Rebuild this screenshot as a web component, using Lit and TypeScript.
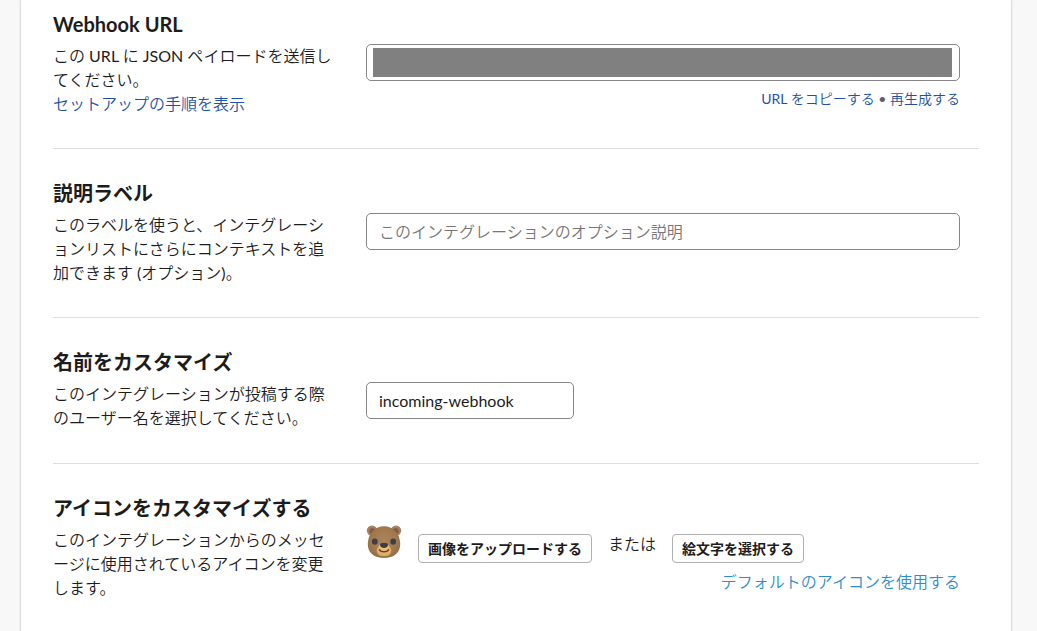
import { LitElement, html, css, svg } from "lit";
import { customElement, state } from "lit/decorators.js";

const bear = svg`
  <defs>
    <radialGradient id="fur" cx="50%" cy="45%" r="60%">
      <stop offset="0" stop-color="#ab845a" />
      <stop offset="0.6" stop-color="#a27a50" />
      <stop offset="1" stop-color="#916c44" />
    </radialGradient>
    <radialGradient id="snout" cx="50%" cy="40%" r="60%">
      <stop offset="0" stop-color="#f0c07e" />
      <stop offset="1" stop-color="#dda963" />
    </radialGradient>
  </defs>
  <circle cx="6" cy="6.6" r="5.2" fill="#a67f5c" />
  <circle cx="30" cy="6.6" r="5.2" fill="#a67f5c" />
  <circle cx="6.4" cy="7.2" r="2.9" fill="#7d5b44" />
  <circle cx="29.6" cy="7.2" r="2.9" fill="#7d5b44" />
  <path d="M18 2.3C26.500 2.3 33.600 8.4 34.2 19.5C34.6 29 27.5 34 18 34S1.400 29 1.800 19.500C2.400 8.400 9.500 2.300 18 2.300Z" fill="url(#fur)" />
  <path d="M18 18.400C21.500 18.400 22.300 20.600 24 23C25.600 25 25.600 27.500 24.500 29.500C23.200 31.600 21 32.200 18 32.200S12.800 31.600 11.500 29.500C10.400 27.500 10.400 25 12 23C13.700 20.600 14.500 18.400 18 18.400Z" fill="url(#snout)" />
  <ellipse cx="8.800" cy="17.600" rx="2.900" ry="3.200" fill="#3b4045" />
  <ellipse cx="27.200" cy="17.600" rx="2.900" ry="3.200" fill="#3b4045" />
  <path d="M14 21C14 19.200 16 18.800 18 18.800S22 19.200 22 21C22 22.800 19.500 24 18 24S14 22.800 14 21Z" fill="#3b3d40" />
  <path d="M13.400 25.800C15 28.300 21 28.300 22.600 25.800" fill="none" stroke="#5a4634" stroke-width="1.500" stroke-linecap="round" />
`;

@customElement("app-root")
export class AppRoot extends LitElement {
  @state() private label = "";
  @state() private username = "incoming-webhook";

  static styles = css`
    :host {
      display: block;
      min-height: 100vh;
      overflow: hidden;
      background: #f8f8f8;
      color: #1d1c1d;
      font-family: Lato, "Noto Sans CJK JP DemiLight", "Noto Sans CJK JP Light", "Noto Sans CJK JP", sans-serif;
      font-size: 16px;
      line-height: 24px;
    }
    *,
    *::before {
      box-sizing: border-box;
    }
    .card {
      min-height: 100vh;
      margin: 0 25px 0 20px;
      padding: 0 32px;
      background: #fff;
      border: solid #ddd;
      border-width: 0 1px;
      box-shadow: 0 1px 2px rgba(0, 0, 0, 0.1);
    }
    .section {
      padding: 32px 0;
      border-bottom: 1px solid #ddd;
    }
    .section:first-child {
      padding-top: 12px;
    }
    .section:last-child {
      border-bottom: 0;
    }
    .title {
      margin: 0 0 8px;
      font-family: Lato, "Noto Sans CJK JP", sans-serif;
      font-size: 20px;
      line-height: 24px;
      font-weight: 700;
    }
    .row {
      display: grid;
      grid-template-columns: 280px minmax(0, 1fr);
      column-gap: 33px;
      min-height: 49px;
      padding-right: 19px;
    }
    .text {
      margin: 0;
    }
    a {
      color: #1f52a3;
      text-decoration: none;
    }
    a:hover {
      text-decoration: underline;
    }
    .field {
      display: block;
      width: 100%;
      height: 37px;
      margin: 0;
      padding: 0 12px;
      border: 1px solid #868686;
      border-radius: 5px;
      background-color: #fff;
      color: #1d1c1d;
      font: inherit;
      outline: 0;
    }
    .field::placeholder {
      color: #767676;
      opacity: 1;
    }
    .field:focus {
      border-color: #1264a3;
    }
    .masked {
      padding: 3px 7px 3px 6px;
      background: #808080 content-box;
      color: #808080;
    }
    .short {
      width: 208px;
    }
    .hint {
      margin: 6px 0 0;
      font-size: 14px;
      text-align: right;
      color: #616061;
    }
    .picker {
      display: flex;
      align-items: flex-start;
      gap: 16px;
      margin-top: -4px;
    }
    .bear {
      display: block;
      width: 36px;
      height: 36px;
    }
    .or {
      margin-top: 8px;
    }
    .btn {
      height: 29px;
      margin: 10px 0 0;
      padding: 0 9px 2px;
      border: 1px solid #b0b0b0;
      border-radius: 4px;
      background: #fff;
      color: #1d1c1d;
      font-family: Lato, "Noto Sans CJK JP", sans-serif;
      font-size: 14px;
      font-weight: 700;
      cursor: pointer;
    }
    .reset {
      margin: 7px 0 0;
      text-align: right;
    }
    .reset a {
      color: #2f8dcd;
    }
  `;

  render() {
    return html`
      <main class="card" lang="ja">
        <section class="section">
          <h2 class="title"><label for="url">Webhook URL</label></h2>
          <div class="row">
            <p class="text">
              この URL に JSON ペイロードを送信してください。<br />
              <a href="#setup">セットアップの手順を表示</a>
            </p>
            <div>
              <input id="url" class="field masked" type="text" readonly />
              <p class="hint">
                <a href="#copy">URL をコピーする</a> •
                <a href="#regenerate">再生成する</a>
              </p>
            </div>
          </div>
        </section>

        <section class="section">
          <h2 class="title"><label for="label">説明ラベル</label></h2>
          <div class="row">
            <p class="text">
              このラベルを使うと、インテグレーションリストにさらにコンテキストを追加できます (オプション)。
            </p>
            <div>
              <input
                id="label"
                class="field"
                type="text"
                placeholder="このインテグレーションのオプション説明"
                .value=${this.label}
                @input=${(e: Event) => (this.label = (e.target as HTMLInputElement).value)}
              />
            </div>
          </div>
        </section>

        <section class="section">
          <h2 class="title"><label for="name">名前をカスタマイズ</label></h2>
          <div class="row">
            <p class="text">このインテグレーションが投稿する際のユーザー名を選択してください。</p>
            <div>
              <input
                id="name"
                class="field short"
                type="text"
                .value=${this.username}
                @input=${(e: Event) => (this.username = (e.target as HTMLInputElement).value)}
              />
            </div>
          </div>
        </section>

        <section class="section">
          <h2 class="title">アイコンをカスタマイズする</h2>
          <div class="row">
            <p class="text">
              このインテグレーションからのメッセージに使用されているアイコンを変更します。
            </p>
            <div>
              <div class="picker">
                <svg class="bear" viewBox="0 0 36 36" aria-hidden="true">${bear}</svg>
                <button class="btn" type="button">画像をアップロードする</button>
                <span class="or">または</span>
                <button class="btn" type="button">絵文字を選択する</button>
              </div>
              <p class="reset"><a href="#default">デフォルトのアイコンを使用する</a></p>
            </div>
          </div>
        </section>
      </main>
    `;
  }
}
